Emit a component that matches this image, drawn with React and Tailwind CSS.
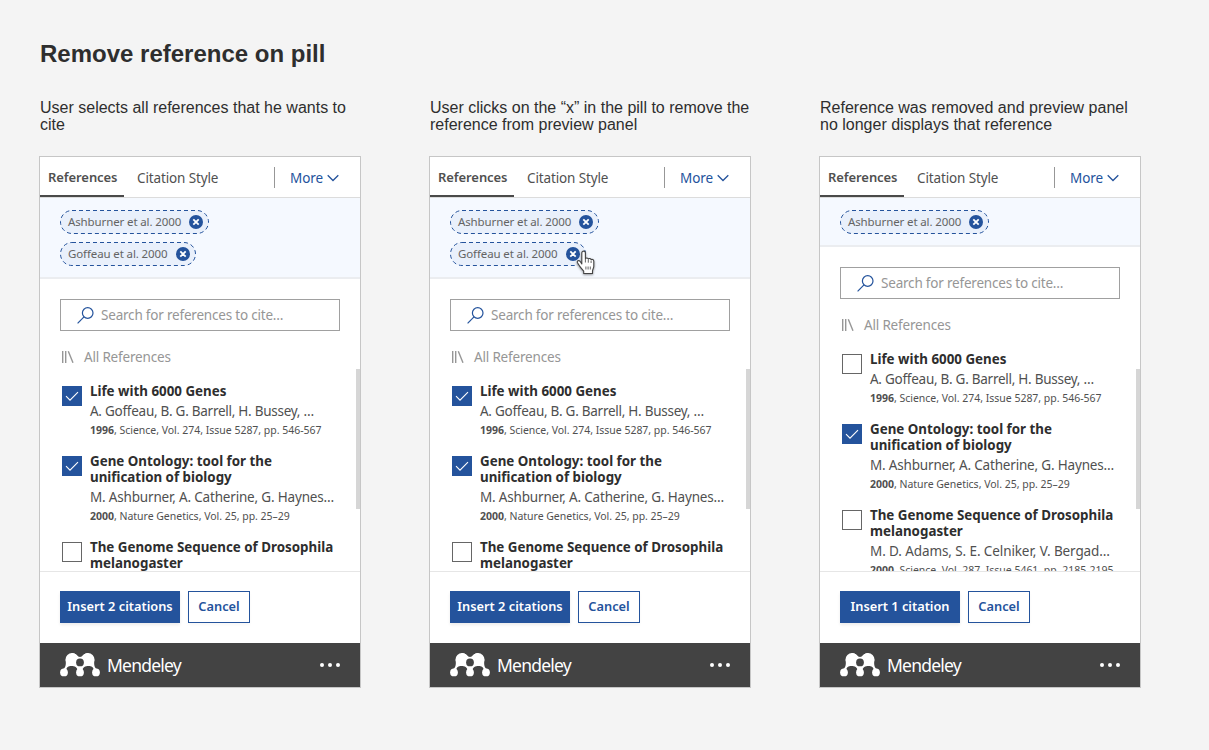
import React from "react";

const genes = {
  title: ["Life with 6000 Genes"],
  authors: "A. Goffeau, B. G. Barrell, H. Bussey, …",
  tracking: "tracking-[-0.260px]",
  year: "1996",
  meta: ", Science, Vol. 274, Issue 5287, pp. 546-567",
};
const ontology = {
  title: ["Gene Ontology: tool for the", "unification of biology"],
  authors: "M. Ashburner, A. Catherine, G. Haynes…",
  tracking: "tracking-[-0.180px]",
  year: "2000",
  meta: ", Nature Genetics, Vol. 25, pp. 25–29",
};
const genome = {
  title: ["The Genome Sequence of Drosophila", "melanogaster"],
  authors: "M. D. Adams, S. E. Celniker, V. Bergad…",
  tracking: "tracking-[-0.100px]",
  year: "2000",
  meta: ", Science, Vol. 287, Issue 5461, pp. 2185-2195",
};

const steps = [
  {
    caption: ["User selects all references that he wants to", "cite"],
    pills: ["Ashburner et al. 2000", "Goffeau et al. 2000"],
    items: [[genes, true], [ontology, true], [genome, false]],
    insert: "Insert 2 citations",
  },
  {
    caption: ["User clicks on the “x” in the pill to remove the", "reference from preview panel"],
    pills: ["Ashburner et al. 2000", "Goffeau et al. 2000"],
    items: [[genes, true], [ontology, true], [genome, false]],
    insert: "Insert 2 citations",
    cursor: true,
  },
  {
    caption: ["Reference was removed and preview panel", "no longer displays that reference"],
    pills: ["Ashburner et al. 2000"],
    items: [[genes, false], [ontology, true], [genome, false]],
    insert: "Insert 1 citation",
  },
];

function HandCursor() {
  return (
    <svg className="absolute -right-[10px] top-[8px] drop-shadow-[0_1px_1px_rgba(0,0,0,0.4)]" width="20" height="26" viewBox="0 0 20 26">
      <path
        d="M5.800 14V3c0-2.500 3.600-2.500 3.600 0v5.800c.4-1.200 2.700-1 2.900.4.600-1.100 2.600-.8 2.800.7.700-.9 2.700-.5 2.700 1.400v5c0 1.600-1.300 3.300-1.300 4.800V23.500H7.700v-2.400C6.500 19.500 4.400 17.600 3.400 15.800L1.500 12.800c-1-1.800 1.300-3 2.600-1.500z"
        fill="#fff"
        stroke="#444"
        strokeWidth="1.1"
        strokeLinejoin="round"
      />
      <path d="M9.400 9v3.500M12.300 10v2.700M15.100 11v2M9.900 16.500v3M12.100 16.500v3M14.300 16.500v3" stroke="#555" strokeWidth="0.9" fill="none" />
    </svg>
  );
}

function Pill({ label, cursor }) {
  const width = label.startsWith("A") ? 149 : 136;
  return (
    <div className={`relative flex h-6 items-center justify-between pl-2 pr-[5px] ${width === 149 ? "w-[149px]" : "w-[136px]"}`}>
      <svg className="absolute inset-0" width={width} height="24">
        <rect x="0.5" y="0.500" width={width - 1} height="23" rx="11.500" fill="#e9f0fb" stroke="#24539c" strokeDasharray="4 3" />
      </svg>
      <span className="relative whitespace-nowrap text-[11.500px] tracking-[-0.120px] text-[#646464]">{label}</span>
      <svg className="relative" width="16" height="16" viewBox="0 0 16 16">
        <circle cx="8" cy="8" r="7" fill="#24539c" />
        <path d="M5.300 5.300l5.400 5.400M10.700 5.300l-5.400 5.400" stroke="#fff" strokeWidth="1.800" />
      </svg>
      {cursor && <HandCursor />}
    </div>
  );
}

function Checkbox({ checked }) {
  return checked ? (
    <div className="mt-[3px] flex size-5 shrink-0 items-center justify-center bg-[#24539c]">
      <svg width="20" height="20" viewBox="0 0 20 20" fill="none" stroke="#fff" strokeWidth="1.100">
        <path d="M4 10.200l4 4 8-8" />
      </svg>
    </div>
  ) : (
    <div className="mt-[3px] size-5 shrink-0 border border-[#666] bg-white" />
  );
}

function Item({ item, checked }) {
  return (
    <div className="mb-[15px] flex gap-2">
      <Checkbox checked={checked} />
      <div className="whitespace-nowrap">
        {item.title.map((line) => (
          <div key={line} className="text-[13.350px] font-bold leading-4 text-[#2e2e2e]">{line}</div>
        ))}
        <div className={`mt-[2px] text-[13.500px] leading-5 text-[#505050] ${item.tracking}`}>{item.authors}</div>
        <div className="mt-px text-[10.500px] leading-4 tracking-[-0.020px] text-[#505050]">
          <b>{item.year}</b>
          <span>{item.meta}</span>
        </div>
      </div>
    </div>
  );
}

function MendeleyLogo() {
  return (
    <svg width="40" height="24" viewBox="0 0 40 24">
      <g fill="#fff">
        <circle cx="12" cy="6.600" r="6.500" />
        <circle cx="28" cy="6.600" r="6.500" />
        <path d="M12 .100c4.500 0 5.500 4 8 4S23.500.100 28 .100l6.400 7c-.8 5 .4 8.300 2.900 9.300l-3.600 1c0-3-2.300-4.300-5-4.300-3.500 0-6.100 1.300-6.300 4.700h-4.800c-.2-3.400-2.800-4.700-6.300-4.700-2.700 0-5 1.300-5 4.300l-3.600-1c2.500-1 3.700-4.300 2.900-9.300z" />
        <circle cx="4" cy="19.400" r="3.900" />
        <circle cx="20" cy="19.400" r="3.900" />
        <circle cx="36" cy="19.400" r="3.900" />
      </g>
      <circle cx="20" cy="9.400" r="3.900" fill="#434343" />
    </svg>
  );
}

function Panel({ step }) {
  return (
    <div className="flex h-[532px] w-[322px] flex-col border border-[#c6c6c6] bg-white font-['Noto_Sans',sans-serif]">
      <div className="flex h-[41px] shrink-0 items-stretch border-b border-[#dcdcdc] text-[13px]">
        <div className="flex w-[84px] items-center whitespace-nowrap border-b-2 border-[#4a4a4a] pl-2 pt-[3px] font-semibold tracking-[-0.080px] text-[#505050]">
          <span>References</span>
        </div>
        <div className="ml-[13px] flex flex-1 items-center whitespace-nowrap pt-[2px] text-[13.500px] tracking-[-0.130px] text-[#505050]">
          <span>Citation Style</span>
        </div>
        <div className="my-auto h-[21px] w-px bg-[#979797]" />
        <div className="flex w-[85px] items-center gap-[4px] pl-[15px] pt-[2px] text-[13.500px] text-[#24539c]">
          <span className="tracking-[-0.050px]">More</span>
          <svg width="12" height="8" viewBox="0 0 12 8" fill="none" stroke="#24539c" strokeWidth="1.300">
            <path d="M0.700 1.200L6 6.500l5.300-5.300" />
          </svg>
        </div>
      </div>

      <div className="flex shrink-0 flex-col gap-2 border-b-2 border-[#ebedf0] bg-[#f5f9ff] pb-[11px] pl-5 pt-3">
        {step.pills.map((p, i) => (
          <Pill key={p} label={p} cursor={step.cursor && i === 1} />
        ))}
      </div>

      <div className="relative min-h-0 flex-1 overflow-hidden pl-5 pt-5">
        <div className="flex h-8 w-[280px] items-center gap-[7px] border border-[#a0a0a0] pl-4">
          <svg width="17" height="17" viewBox="0 0 17 17" fill="none" stroke="#24539c" strokeWidth="1.200">
            <circle cx="10.700" cy="6" r="5.300" />
            <path d="M7 9.800L0.600 16.300" />
          </svg>
          <span className="text-[13.500px] tracking-[-0.200px] text-[#969696]">Search for references to cite…</span>
        </div>
        <div className="mt-4 flex h-5 items-center gap-[10px] pl-[2px]">
          <svg width="12" height="12" viewBox="0 0 12 12" fill="none" stroke="#969696">
            <path d="M0.700 0v12M3.700 0v12" strokeWidth="1.400" />
            <path d="M6.300 0.300L11 11.800" strokeWidth="1.400" />
          </svg>
          <span className="text-[13.500px] tracking-[-0.180px] text-[#969696]">All References</span>
        </div>
        <div className="mt-4 pl-[2px]">
          {step.items.map(([item, checked]) => (
            <Item key={item.title[0]} item={item} checked={checked} />
          ))}
        </div>
        <div className={`absolute right-0 h-[140px] w-1 bg-[#d6d6d6] ${step.pills.length === 1 ? "top-[122px]" : "top-[90px]"}`} />
      </div>

      <div className="flex h-[72px] shrink-0 gap-2 border-t border-[#e6e6e6] pl-5 pt-[19px] text-[12.800px] font-semibold">
        <div className="flex h-8 w-[120px] items-center justify-center whitespace-nowrap bg-[#24539c] text-white shadow-[0_2px_3px_rgba(0,0,0,0.08)]">
          <span>{step.insert}</span>
        </div>
        <div className="flex h-8 w-[62px] items-center justify-center border border-[#24539c] text-[#24539c] shadow-[0_2px_3px_rgba(0,0,0,0.03)]">
          <span>Cancel</span>
        </div>
      </div>

      <div className="flex h-11 shrink-0 items-center bg-[#434343] px-5">
        <MendeleyLogo />
        <span className="ml-[7px] flex-1 pt-px text-[17.500px] tracking-[-0.780px] text-white">Mendeley</span>
        <svg width="20" height="4" viewBox="0 0 20 4" fill="#fff">
          <circle cx="2" cy="2" r="2" />
          <circle cx="10" cy="2" r="2" />
          <circle cx="18" cy="2" r="2" />
        </svg>
      </div>
    </div>
  );
}

export default function App() {
  return (
    <div className="h-[750px] w-[1209px] overflow-hidden bg-[#f4f4f4] pl-[39px] pt-[38px] font-['Liberation_Sans',Arial,sans-serif]">
      <h1 className="ml-px h-[61px] text-[24px] font-bold leading-8 text-[#2e2e2e]">Remove reference on pill</h1>
      <div className="flex gap-[68px]">
        {steps.map((step) => (
          <section key={step.insert + step.caption[0]} className="w-[322px]">
            <div className="h-[57px] whitespace-nowrap pl-px text-[16px] leading-[17px] text-[#2e2e2e]">
              {step.caption.map((line) => (
                <p key={line}>{line}</p>
              ))}
            </div>
            <Panel step={step} />
          </section>
        ))}
      </div>
    </div>
  );
}
